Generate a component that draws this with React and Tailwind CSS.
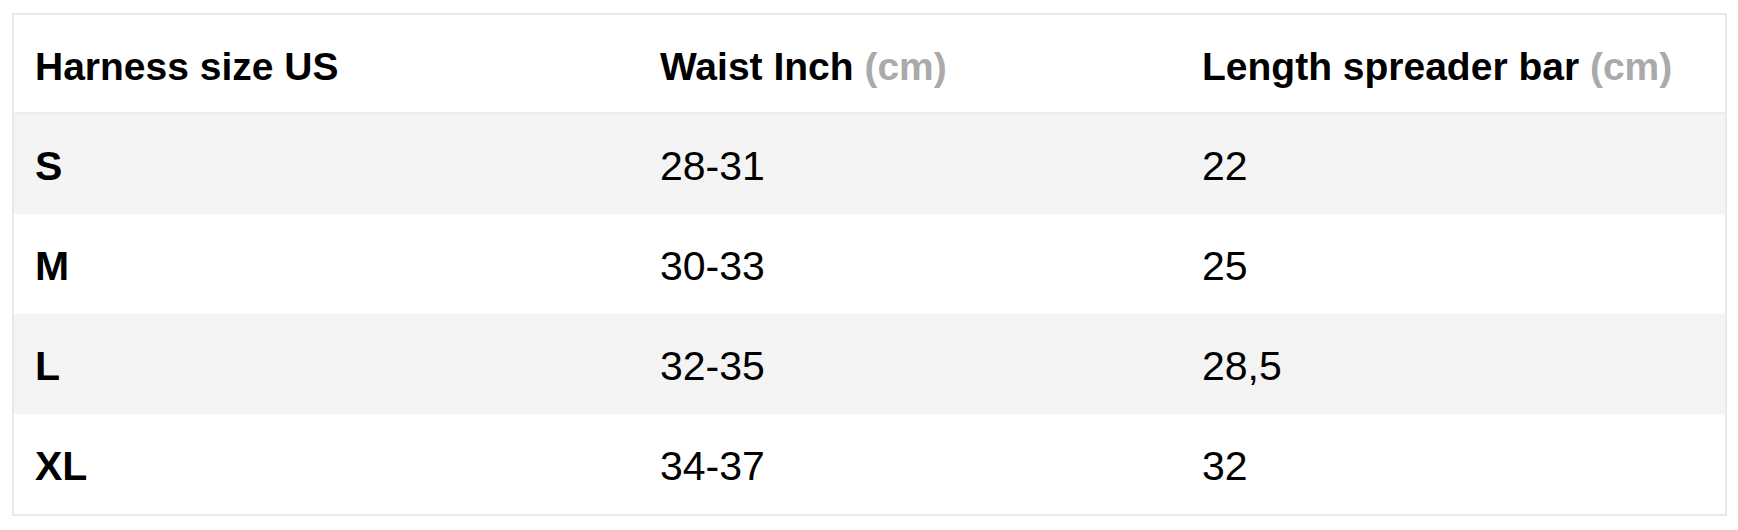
const ROWS = [
  { size: 'S', waist: '28-31', bar: '22' },
  { size: 'M', waist: '30-33', bar: '25' },
  { size: 'L', waist: '32-35', bar: '28,5' },
  { size: 'XL', waist: '34-37', bar: '32' },
];

const cols = 'grid grid-cols-[625px_542px_1fr]';

export default function App() {
  return (
    <div className="min-h-screen bg-white pl-[12px] pt-[13px] font-['Liberation_Sans',Arial,sans-serif] text-black">
      <div className="w-[1715px] border-2 border-[#e9e9e9]">
        {/* Header */}
        <div className={`${cols} h-[99px] items-center border-b-2 border-[#ededed] pt-[8px] text-[39px] font-bold`}>
          <div className="pl-[21px]">Harness size US</div>
          <div className="pl-[21px]">
            Waist Inch <span className="text-[#aaaaaa]">(cm)</span>
          </div>
          <div className="pl-[21px]">
            Length spreader bar <span className="text-[#aaaaaa]">(cm)</span>
          </div>
        </div>

        {/* Body */}
        {ROWS.map((r, i) => (
          <div
            key={r.size}
            className={`${cols} h-[100px] items-center pt-[6px] text-[41px] ${i % 2 === 0 ? 'bg-[#f4f4f4]' : 'bg-white'}`}
          >
            <div className="pl-[21px] font-bold">{r.size}</div>
            <div className="pl-[21px]">{r.waist}</div>
            <div className="pl-[21px]">{r.bar}</div>
          </div>
        ))}
      </div>
    </div>
  );
}
